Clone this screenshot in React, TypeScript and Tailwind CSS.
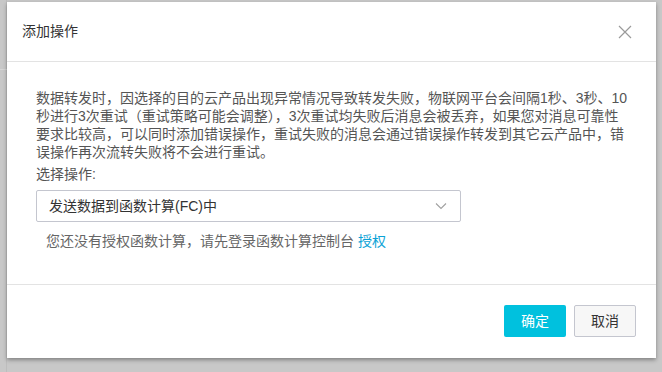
import React from 'react';

const FONT = { fontFamily: '"Liberation Sans", "Noto Sans CJK SC", sans-serif' };

export default function App() {
  return (
    <div className="relative h-[372px] w-[662px] overflow-hidden bg-[#c8c8c8]" style={FONT}>
      {/* page behind the mask */}
      <div className="absolute left-0 top-0 h-full w-[7px] border-r border-[#bdbdbd]" />
      <div className="absolute left-0 top-[69px] h-px w-[7px] bg-[#d6d6d6]" />

      <div className="absolute left-[7px] top-[2px] flex w-[649px] flex-col bg-white shadow-[0_2px_4px_rgba(0,0,0,0.35)]">
        {/* Header */}
        <div className="flex h-[60px] items-center justify-between border-b border-[#e3e3e3] pl-[15px] pr-[24px]">
          <span className="text-[14px] text-[#333]">添加操作</span>
          <svg width="14" height="14" viewBox="0 0 14 14" className="text-[#9a9a9a]">
            <path d="M1 1 L13 13 M13 1 L1 13" stroke="currentColor" strokeWidth="1.2" fill="none" />
          </svg>
        </div>

        {/* Body */}
        <div className="flex flex-col pl-[29px] pr-[20px] pb-[34px] pt-[27px]">
          <p className="w-[596px] text-[14px] leading-[18px] text-[#555]">
            数据转发时，因选择的目的云产品出现异常情况导致转发失败，物联网平台会间隔1秒、3秒、10秒进行3次重试（重试策略可能会调整），3次重试均失败后消息会被丢弃，如果您对消息可靠性要求比较高，可以同时添加错误操作，重试失败的消息会通过错误操作转发到其它云产品中，错误操作再次流转失败将不会进行重试。
          </p>
          <div className="mt-[4px] text-[14px] leading-[18px] text-[#555]">选择操作:</div>
          <div className="mt-[7px] flex h-[32px] w-[425px] items-center justify-between rounded-[2px] border border-[#c4c6cf] pl-[12px] pr-[13px]">
            <span className="text-[14px] text-[#333]">发送数据到函数计算(FC)中</span>
            <svg width="12" height="8" viewBox="0 0 12 8" className="text-[#a0a0a0]">
              <path d="M1 1.5 L6 6.5 L11 1.5" stroke="currentColor" strokeWidth="1.1" fill="none" />
            </svg>
          </div>
          <div className="mt-[10px] pl-[10px] text-[14px] leading-[18px] text-[#666]">
            您还没有授权函数计算，请先登录函数计算控制台 <span className="text-[#0aa2d6]">授权</span>
          </div>
        </div>

        {/* Footer */}
        <div className="flex justify-end gap-[8px] border-t border-[#e3e3e3] pb-[21px] pr-[20px] pt-[20px]">
          <button className="h-[32px] w-[62px] rounded-[2px] bg-[#00c1de] text-[14px] text-white">确定</button>
          <button className="h-[32px] w-[62px] rounded-[2px] border border-[#c4c6cf] bg-[#f7f7f7] text-[14px] text-[#333]">取消</button>
        </div>
      </div>
    </div>
  );
}
